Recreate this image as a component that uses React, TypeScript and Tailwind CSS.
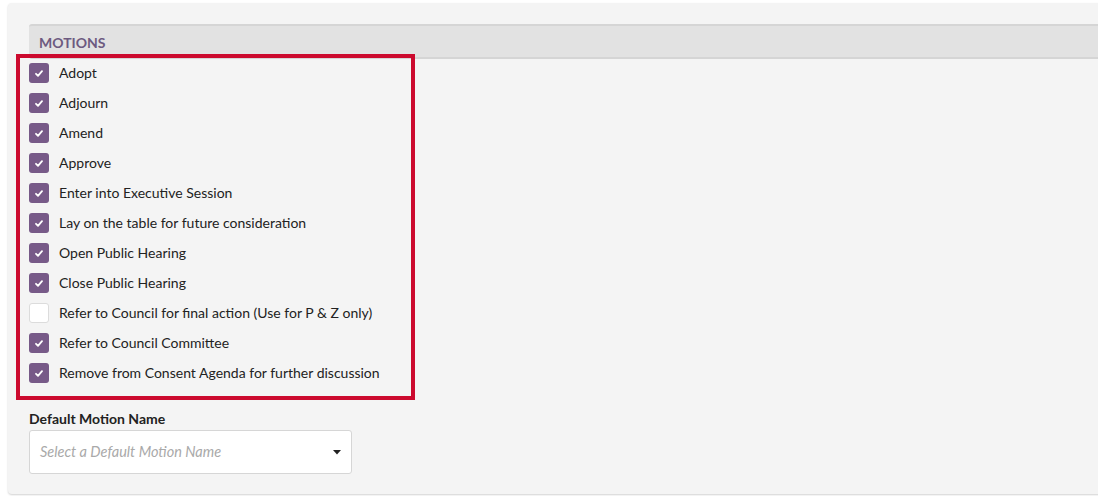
import React from "react";

const items: { label: string; checked: boolean }[] = [
  { label: "Adopt", checked: true },
  { label: "Adjourn", checked: true },
  { label: "Amend", checked: true },
  { label: "Approve", checked: true },
  { label: "Enter into Executive Session", checked: true },
  { label: "Lay on the table for future consideration", checked: true },
  { label: "Open Public Hearing", checked: true },
  { label: "Close Public Hearing", checked: true },
  { label: "Refer to Council for final action (Use for P & Z only)", checked: false },
  { label: "Refer to Council Committee", checked: true },
  { label: "Remove from Consent Agenda for further discussion", checked: true },
];

function Box({ checked }: { checked: boolean }) {
  if (!checked) {
    return <div className="w-[20px] h-[20px] rounded-[3px] bg-white border border-[#dcdcdc] shrink-0" />;
  }
  return (
    <div className="w-[20px] h-[20px] rounded-[3px] bg-[#775a88] flex items-center justify-center shrink-0">
      <svg width="8" height="7" viewBox="0 0 8 7">
        <path d="M1 3.8 L3 5.8 L7 1.2" fill="none" stroke="white" strokeWidth="1.8" strokeLinecap="round" strokeLinejoin="round" />
      </svg>
    </div>
  );
}

export default function App() {
  return (
    <div className="relative w-[1098px] h-[496px] bg-white overflow-hidden" style={{ fontFamily: "Lato, 'Liberation Sans', sans-serif" }}>
      <div className="ml-[8px] mt-[3px] w-[1110px] h-[491px] bg-[#f4f4f4] rounded-[4px] shadow-[0_1px_2px_rgba(0,0,0,0.18)] pl-[21px] pt-[21px]">
        <div className="h-[35px] bg-[#e2e2e2] border-y-2 border-[#d5d5d5] rounded-l-[3px] flex items-center pl-[10px] pt-[1px]">
          <span className="text-[14px] font-bold text-[#6d5a80]">MOTIONS</span>
        </div>
        <div className="mt-[4px] flex flex-col gap-[10px]">
          {items.map((it) => (
            <div key={it.label} className="flex items-center h-[20px] gap-[10px]">
              <Box checked={it.checked} />
              <span className="text-[14px] text-[#222222] leading-[20px]">{it.label}</span>
            </div>
          ))}
        </div>
        <div className="mt-[26px] text-[14px] font-bold text-[#222222] leading-[20px]">Default Motion Name</div>
        <div className="mt-[1px] w-[323px] h-[44px] bg-white border border-[#d6d6d6] rounded-[3px] flex items-center justify-between pl-[10px] pr-[10px]">
          <span className="text-[14.5px] italic text-[#a9a9a9]">Select a Default Motion Name</span>
          <svg width="8" height="5" viewBox="0 0 8 5">
            <path d="M0 0 L8 0 L4 4.5 Z" fill="#222" />
          </svg>
        </div>
      </div>
      <div className="absolute left-[16px] top-[54px] w-[399px] h-[346px] border-[4px] border-[#cc0a2e]" />
    </div>
  );
}
